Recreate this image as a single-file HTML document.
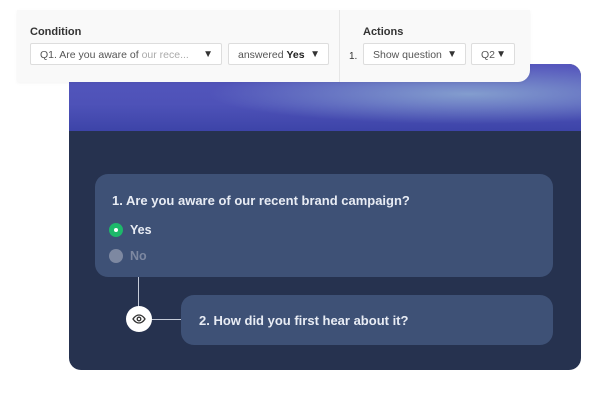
<!DOCTYPE html>
<html><head><style>
body{margin:0;width:600px;height:400px;background:#fff;position:relative;overflow:hidden;font-family:"Liberation Sans",sans-serif}
.panel{position:absolute;left:69px;top:64px;width:512px;height:306px;background:#26324f;border-radius:12px;overflow:hidden}
.band{position:absolute;left:0;top:0;width:100%;height:67px;background:radial-gradient(ellipse 260px 30px at 400px 30px,rgba(140,170,210,.85),rgba(140,170,210,0)),linear-gradient(180deg,#5657bd 0%,#4e52b8 60%,#3d44a8 100%)}
.top{position:absolute;left:17px;top:10px;width:513px;height:72px;background:#f9f9f9;border-radius:0 0 12px 0;box-shadow:0 1px 3px rgba(0,0,0,.05)}
.lbl{position:absolute;top:16px;font-size:11px;color:#333;font-weight:bold}
.sel{position:absolute;top:33px;height:22px;background:#fff;border:1px solid #ddd;border-radius:2px;font-size:10.5px;color:#555;line-height:22px;box-sizing:border-box;padding-left:9px}
.sel .ar{position:absolute;right:8px;top:0;font-size:10px;color:#333}
.card{position:absolute;background:#3e5176;border-radius:13px;color:#e8ecf4}
.q{font-size:13px;font-weight:bold}
</style></head><body>
<div class="panel"><div class="band"></div></div>
<div class="top">
<div style="position:absolute;left:322px;top:0;width:1px;height:72px;background:#e6e6e6"></div>
<div class="lbl" style="left:13px">Condition</div>
<div class="lbl" style="left:346px">Actions</div>
<div class="sel" style="left:13px;width:192px">Q1. Are you aware of <span style="color:#aaa">our rece...</span><span class="ar">▼</span></div>
<div class="sel" style="left:211px;width:101px">answered <b style="color:#222">Yes</b><span class="ar">▼</span></div>
<div style="position:absolute;left:332px;top:41px;font-size:10px;color:#333">1.</div>
<div class="sel" style="left:346px;width:103px">Show question<span class="ar">▼</span></div>
<div class="sel" style="left:454px;width:44px">Q2<span class="ar">▼</span></div>
</div>
<div class="card" style="left:95px;top:174px;width:458px;height:103px">
<div class="q" style="position:absolute;left:17px;top:19px">1. Are you aware of our recent brand campaign?</div>
<div style="position:absolute;left:14px;top:49px;width:14px;height:14px;border-radius:50%;background:#1db86a"><div style="width:4px;height:4px;background:#fff;border-radius:50%;margin:5px"></div></div>
<div style="position:absolute;left:35px;top:49px;font-size:12.5px;font-weight:bold">Yes</div>
<div style="position:absolute;left:14px;top:75px;width:14px;height:14px;border-radius:50%;background:#7d88a1"></div>
<div style="position:absolute;left:35px;top:75px;font-size:12.5px;color:#7d88a1;font-weight:bold">No</div>
</div>
<div style="position:absolute;left:138px;top:277px;width:1px;height:30px;background:#c5cbd8"></div>
<div style="position:absolute;left:150px;top:319px;width:31px;height:1px;background:#c5cbd8"></div>
<div style="position:absolute;left:126px;top:306px;width:26px;height:26px;border-radius:50%;background:#fff">
<svg width="26" height="26" viewBox="0 0 26 26"><path d="M7 13c2-3 4-4 6-4s4 1 6 4c-2 3-4 4-6 4s-4-1-6-4z" fill="none" stroke="#333" stroke-width="1.3"/><circle cx="13" cy="13" r="1.8" fill="none" stroke="#333" stroke-width="1.3"/></svg></div>
<div class="card" style="left:181px;top:295px;width:372px;height:50px">
<div class="q" style="position:absolute;left:18px;top:18px">2. How did you first hear about it?</div>
</div>
</body></html>
